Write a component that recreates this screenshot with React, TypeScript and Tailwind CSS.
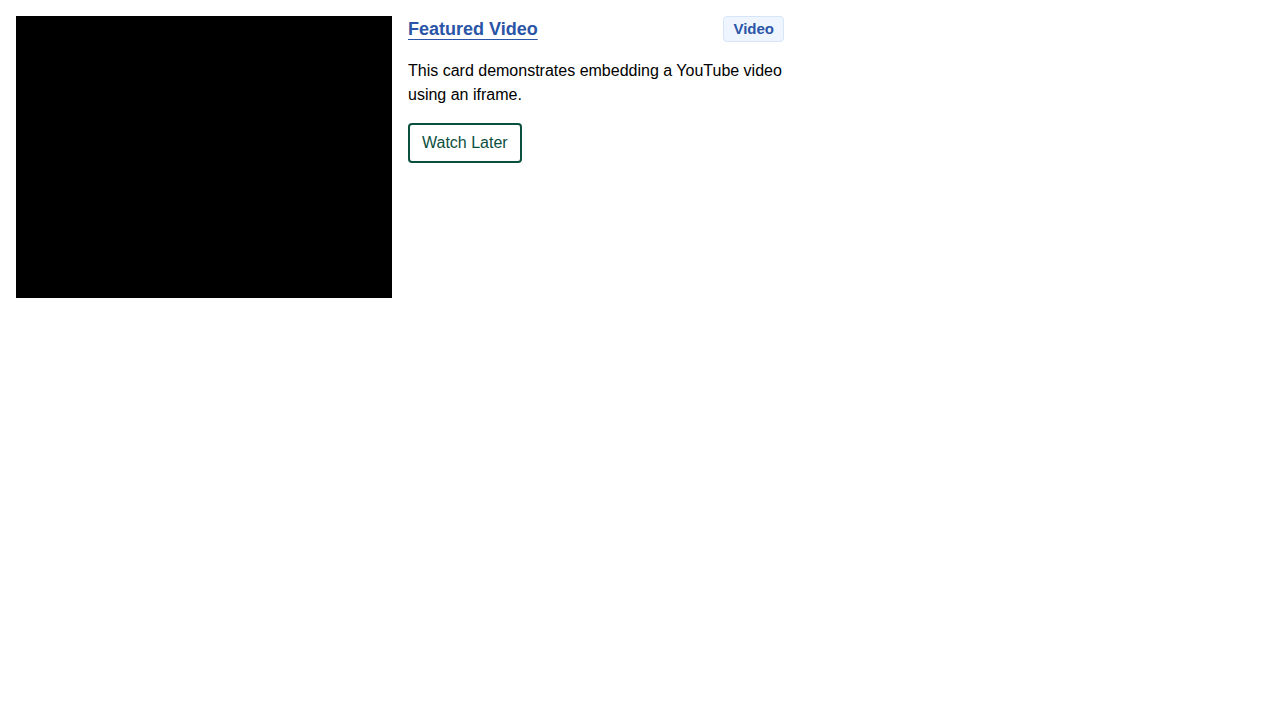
const BLUE = '#2a55a6';

export default function App() {
  return (
    <div className="min-h-screen bg-white p-4 font-['Liberation_Sans',Arial,sans-serif] text-black">
      <div className="grid max-w-3xl grid-cols-2 gap-4">
        {/* video placeholder (iframe) */}
        <div className="h-[282px] bg-black" />

        <div className="flex flex-col items-start">
          <div className="flex w-full items-start justify-between">
            <a
              href="#"
              className="mt-[1px] text-lg font-bold leading-6 underline decoration-1 underline-offset-[4px]"
              style={{ color: BLUE }}
            >
              Featured Video
            </a>
            <span className="h-[26px] rounded-sm border border-[#d5e5fa] bg-[#eef5ff] px-[9px] text-[15px] font-bold leading-6 text-[#2a55a6]">
              Video
            </span>
          </div>

          <p className="mt-[17px] text-base leading-6">
            This card demonstrates embedding a YouTube video using an iframe.
          </p>

          <button className="mt-4 rounded-sm border-2 border-[#0b4f3e] px-3 py-1.5 text-base leading-6 text-[#0b4f3e]">
            Watch Later
          </button>
        </div>
      </div>
    </div>
  );
}
